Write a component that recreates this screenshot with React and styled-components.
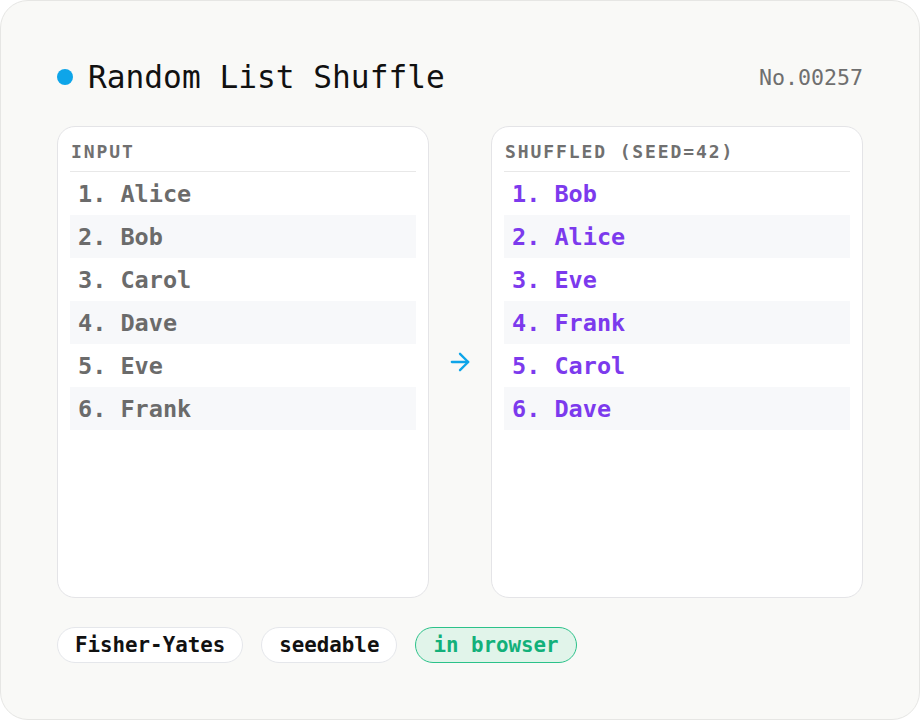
import React from 'react';
import styled, { createGlobalStyle } from 'styled-components';
import { ArrowRight } from 'lucide-react';

const GlobalStyle = createGlobalStyle`
  html, body {
    margin: 0;
    padding: 0;
    background: #ffffff;
  }
  * { box-sizing: border-box; }
`;

const mono = `"DejaVu Sans Mono", "Liberation Mono", monospace`;

const Card = styled.div`
  width: 920px;
  height: 720px;
  background: #f9f9f7;
  border: 1px solid #e6e6e4;
  border-radius: 28px;
  padding: 56px;
  display: flex;
  flex-direction: column;
  gap: 29px;
  font-family: ${mono};
`;

const Header = styled.div`
  height: 40px;
  display: flex;
  align-items: center;
  justify-content: space-between;
`;

const TitleGroup = styled.div`
  display: flex;
  align-items: center;
  gap: 15px;
`;

const Dot = styled.span`
  width: 16px;
  height: 16px;
  border-radius: 50%;
  background: #0ea5e9;
`;

const Title = styled.h1`
  margin: 0;
  font-size: 31.2px;
  font-weight: 400;
  color: #111111;
`;

const Serial = styled.span`
  font-size: 21.6px;
  color: #6f6f6f;
`;

const Panels = styled.div`
  flex: 1;
  display: grid;
  grid-template-columns: 1fr 62px 1fr;
`;

const Panel = styled.div`
  background: #ffffff;
  border: 1px solid #e4e4e7;
  border-radius: 18px;
  padding: 12px;
  display: flex;
  flex-direction: column;
`;

const Label = styled.div`
  font-size: 18px;
  line-height: 24px;
  font-weight: 700;
  letter-spacing: 1.9px;
  color: #707070;
  padding: 1px 0 7px 1px;
  border-bottom: 1px solid #e8e8e8;
`;

const List = styled.ol`
  list-style: none;
  margin: 0;
  padding: 0;
`;

const Row = styled.li`
  height: 43px;
  display: flex;
  align-items: center;
  padding-left: 8px;
  font-size: 23.5px;
  font-weight: 700;
  white-space: pre;
  color: ${p => (p.$accent ? '#7c3aed' : '#6b6b6b')};
  background: ${p => (p.$striped ? '#f7f8fa' : 'transparent')};
`;

const Arrow = styled.div`
  display: flex;
  align-items: center;
  justify-content: center;
  color: #0ea5e9;
`;

const Tags = styled.div`
  display: flex;
  gap: 18px;
`;

const Tag = styled.span`
  height: 36px;
  display: inline-flex;
  align-items: center;
  padding: 0 17px;
  border-radius: 999px;
  font-size: 20.8px;
  font-weight: 700;
  border: 1px solid ${p => (p.$green ? '#2cc28a' : '#e5e7eb')};
  background: ${p => (p.$green ? '#e1f4ea' : '#ffffff')};
  color: ${p => (p.$green ? '#12b07a' : '#111111')};
`;

const input = ['Alice', 'Bob', 'Carol', 'Dave', 'Eve', 'Frank'];
const shuffled = ['Bob', 'Alice', 'Eve', 'Frank', 'Carol', 'Dave'];

function NameList({ names, accent }) {
  return (
    <List>
      {names.map((n, i) => (
        <Row key={n} $striped={i % 2 === 1} $accent={accent}>
          {`${i + 1}. ${n}`}
        </Row>
      ))}
    </List>
  );
}

export default function App() {
  return (
    <>
      <GlobalStyle />
      <Card>
        <Header>
          <TitleGroup>
            <Dot />
            <Title>Random List Shuffle</Title>
          </TitleGroup>
          <Serial>No.00257</Serial>
        </Header>

        <Panels>
          <Panel>
            <Label>INPUT</Label>
            <NameList names={input} />
          </Panel>
          <Arrow>
            <ArrowRight size={28} strokeWidth={2} />
          </Arrow>
          <Panel>
            <Label>SHUFFLED (SEED=42)</Label>
            <NameList names={shuffled} accent />
          </Panel>
        </Panels>

        <Tags>
          <Tag>Fisher-Yates</Tag>
          <Tag>seedable</Tag>
          <Tag $green>in browser</Tag>
        </Tags>
      </Card>
    </>
  );
}
